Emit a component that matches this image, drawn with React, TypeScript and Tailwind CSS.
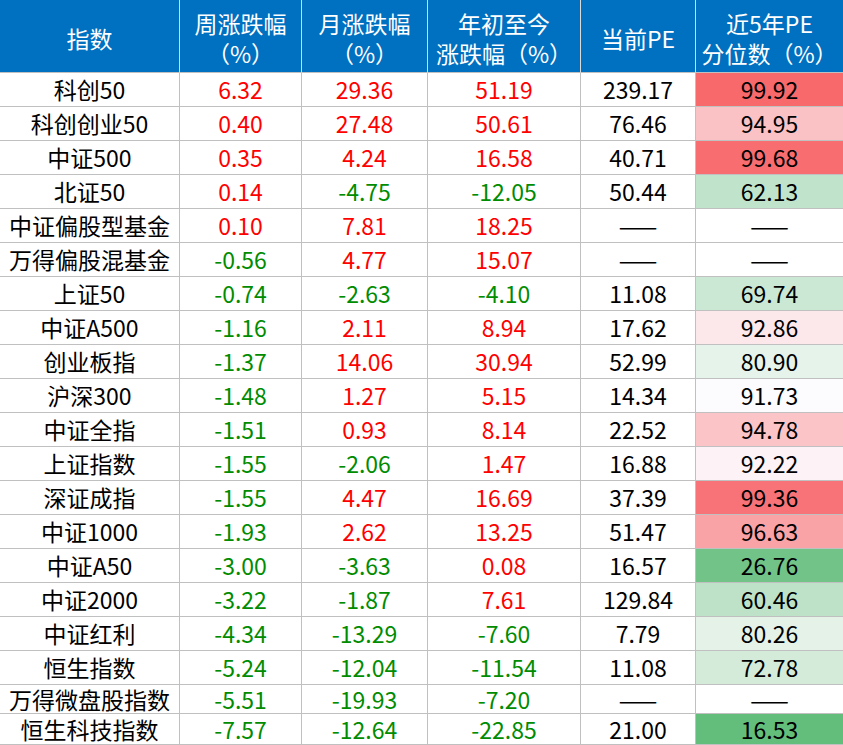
type Row = {
  name: string
  week: string
  month: string
  ytd: string
  pe: string
  pct: string
  bg: string
  h: string
}

const rows: Row[] = [
  { name: "科创50", week: "6.32", month: "29.36", ytd: "51.19", pe: "239.17", pct: "99.92", bg: "bg-[#f8696b]", h: "h-[34px]" },
  { name: "科创创业50", week: "0.40", month: "27.48", ytd: "50.61", pe: "76.46", pct: "94.95", bg: "bg-[#fac2c5]", h: "h-[34px]" },
  { name: "中证500", week: "0.35", month: "4.24", ytd: "16.58", pe: "40.71", pct: "99.68", bg: "bg-[#f86d6f]", h: "h-[34px]" },
  { name: "北证50", week: "0.14", month: "-4.75", ytd: "-12.05", pe: "50.44", pct: "62.13", bg: "bg-[#c0e4cb]", h: "h-[34px]" },
  { name: "中证偏股型基金", week: "0.10", month: "7.81", ytd: "18.25", pe: "——", pct: "——", bg: "bg-white", h: "h-[34px]" },
  { name: "万得偏股混基金", week: "-0.56", month: "4.77", ytd: "15.07", pe: "——", pct: "——", bg: "bg-white", h: "h-[34px]" },
  { name: "上证50", week: "-0.74", month: "-2.63", ytd: "-4.10", pe: "11.08", pct: "69.74", bg: "bg-[#cbe8d4]", h: "h-[34px]" },
  { name: "中证A500", week: "-1.16", month: "2.11", ytd: "8.94", pe: "17.62", pct: "92.86", bg: "bg-[#fce7ea]", h: "h-[34px]" },
  { name: "创业板指", week: "-1.37", month: "14.06", ytd: "30.94", pe: "52.99", pct: "80.90", bg: "bg-[#e5f3ea]", h: "h-[34px]" },
  { name: "沪深300", week: "-1.48", month: "1.27", ytd: "5.15", pe: "14.34", pct: "91.73", bg: "bg-[#fcfcff]", h: "h-[34px]" },
  { name: "中证全指", week: "-1.51", month: "0.93", ytd: "8.14", pe: "22.52", pct: "94.78", bg: "bg-[#fbc4c7]", h: "h-[34px]" },
  { name: "上证指数", week: "-1.55", month: "-2.06", ytd: "1.47", pe: "16.88", pct: "92.22", bg: "bg-[#fdf2f5]", h: "h-[34px]" },
  { name: "深证成指", week: "-1.55", month: "4.47", ytd: "16.69", pe: "37.39", pct: "99.36", bg: "bg-[#f87377]", h: "h-[34px]" },
  { name: "中证1000", week: "-1.93", month: "2.62", ytd: "13.25", pe: "51.47", pct: "96.63", bg: "bg-[#faa3a6]", h: "h-[34px]" },
  { name: "中证A50", week: "-3.00", month: "-3.63", ytd: "0.08", pe: "16.57", pct: "26.76", bg: "bg-[#72c388]", h: "h-[34px]" },
  { name: "中证2000", week: "-3.22", month: "-1.87", ytd: "7.61", pe: "129.84", pct: "60.46", bg: "bg-[#bde2c8]", h: "h-[34px]" },
  { name: "中证红利", week: "-4.34", month: "-13.29", ytd: "-7.60", pe: "7.79", pct: "80.26", bg: "bg-[#e4f2e8]", h: "h-[34px]" },
  { name: "恒生指数", week: "-5.24", month: "-12.04", ytd: "-11.54", pe: "11.08", pct: "72.78", bg: "bg-[#d4ebda]", h: "h-[34px]" },
  { name: "万得微盘股指数", week: "-5.51", month: "-19.93", ytd: "-7.20", pe: "——", pct: "——", bg: "bg-white", h: "h-[29px]" },
  { name: "恒生科技指数", week: "-7.57", month: "-12.64", ytd: "-22.85", pe: "21.00", pct: "16.53", bg: "bg-[#63be7b]", h: "h-[31px]" },
]

const tone = (v: string) => (v.startsWith("-") ? "text-[#008c00]" : "text-[#ff0000]")

const cell = "flex items-center justify-center border-r border-b border-[#c0c0c0] whitespace-nowrap"

const App = () => {
  return (
    <div
      className="w-[843px] h-[745px] overflow-hidden bg-white text-[23px] leading-none text-black"
      style={{ fontFamily: '"Noto Sans CJK SC", "Noto Sans", sans-serif' }}
    >
      <div className="grid grid-cols-[180px_122px_126px_153px_115px_147px]">
        {/* header */}
        <div className={`${cell} h-[73px] bg-[#0070c0] text-white border-r-[#d9d9d9] pt-1`}>指数</div>
        <div className={`${cell} h-[73px] bg-[#0070c0] text-white border-r-[#d9d9d9] flex-col leading-[30px] pt-1`}>
          <span>周涨跌幅</span>
          <span>（%）</span>
        </div>
        <div className={`${cell} h-[73px] bg-[#0070c0] text-white border-r-[#d9d9d9] flex-col leading-[30px] pt-1`}>
          <span>月涨跌幅</span>
          <span>（%）</span>
        </div>
        <div className={`${cell} h-[73px] bg-[#0070c0] text-white border-r-[#d9d9d9] flex-col leading-[30px] pt-1`}>
          <span>年初至今</span>
          <span>涨跌幅（%）</span>
        </div>
        <div className={`${cell} h-[73px] bg-[#0070c0] text-white border-r-[#d9d9d9] pt-1`}>当前PE</div>
        <div className={`${cell} h-[73px] bg-[#0070c0] text-white border-r-0 flex-col leading-[30px] pt-1`}>
          <span>近5年PE</span>
          <span>分位数（%）</span>
        </div>

        {rows.map((r) => (
          <div key={r.name} className="contents">
            <div className={`${cell} ${r.h}`}>{r.name}</div>
            <div className={`${cell} ${r.h} ${tone(r.week)}`}>{r.week}</div>
            <div className={`${cell} ${r.h} ${tone(r.month)}`}>{r.month}</div>
            <div className={`${cell} ${r.h} ${tone(r.ytd)}`}>{r.ytd}</div>
            <div className={`${cell} ${r.h}`}>{r.pe}</div>
            <div className={`${cell} ${r.h} ${r.bg} border-r-0`}>{r.pct}</div>
          </div>
        ))}
      </div>
    </div>
  )
}

export default App
